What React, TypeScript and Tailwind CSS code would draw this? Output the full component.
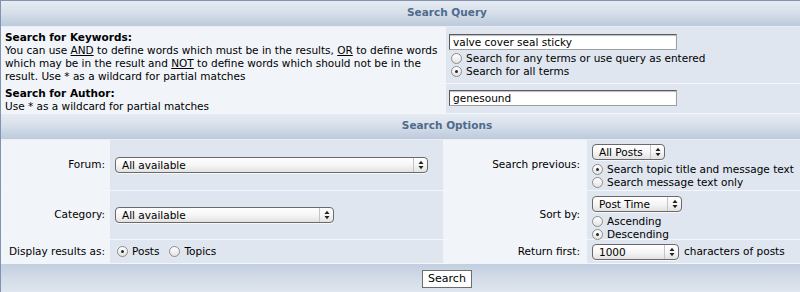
import React from 'react';

const Radio = ({ checked }: { checked?: boolean }) => (
  <span className="relative inline-block w-[11px] h-[11px] shrink-0 rounded-full border border-[#8c8c8c] bg-gradient-to-b from-white to-[#e4e4e4]">
    {checked && <span className="absolute left-[3px] top-[3px] w-[3px] h-[3px] rounded-full bg-[#2a2a2a]" />}
  </span>
);

const Arrows = () => (
  <svg width="6" height="10" viewBox="0 0 6 10">
    <path d="M0.5 4 L3 0.8 L5.5 4 Z" fill="#222" />
    <path d="M0.5 6 L3 9.2 L5.5 6 Z" fill="#222" />
  </svg>
);

const Select = ({ label, className }: { label: string; className: string }) => (
  <div className={`flex items-center h-[16px] rounded-[4px] border border-[#6a6a6a] bg-gradient-to-b from-white via-[#f6f6f6] to-[#e2e2e2] shadow-[0_1px_0_#f5f7fa] ${className}`}>
    <span className="flex-1 pl-[6px] leading-[14px] whitespace-nowrap">{label}</span>
    <span className="flex items-center justify-center w-[14px] h-full border-l border-[#c4c4c4]">
      <Arrows />
    </span>
  </div>
);

const TextInput = ({ value }: { value: string }) => (
  <div className="w-[228px] h-[16px] border border-[#5a5a5a] border-b-[#a0a0a0] border-r-[#a0a0a0] bg-white pl-[3px] leading-[14px] shadow-[inset_0_1px_1px_#bdbdbd]">
    {value}
  </div>
);

const Header = ({ title }: { title: string }) => (
  <div className="h-[26px] flex items-center justify-center pb-[2px] bg-gradient-to-b from-[#e7ecf3] via-[#d5dee9] to-[#bccadc] border-b border-dotted border-[#eef2f7] font-bold text-[#4e6b8d]">
    {title}
  </div>
);

const RadioLine = ({ checked, children }: { checked?: boolean; children: React.ReactNode }) => (
  <label className="flex items-center gap-[4px] h-[13px] whitespace-nowrap">
    <Radio checked={checked} />
    <span>{children}</span>
  </label>
);

export default function App() {
  return (
    <div className="w-[800px] h-[292px] overflow-hidden bg-white text-black text-[10.5px] font-['Lucida_Grande','DejaVu_Sans',sans-serif]">
      <div className="w-[893px] flex flex-col gap-px bg-[#f3f6fa] border-l border-t border-[#8193ae]">
        <Header title="Search Query" />

        <div className="flex h-[56px] -mt-px">
          <div className="w-[445px] bg-[#f1f4f9] px-[4px] pt-[4px] leading-[13px] whitespace-nowrap">
            <div className="font-bold">Search for Keywords:</div>
            <div>
              You can use <u>AND</u> to define words which must be in the results, <u>OR</u> to define words
              <br />
              which may be in the result and <u>NOT</u> to define words which should not be in the
              <br />
              result. Use * as a wildcard for partial matches
            </div>
          </div>
          <div className="flex-1 bg-[#dfe6ef] pl-[3px] pt-[7px]">
            <TextInput value="valve cover seal sticky" />
            <div className="mt-[2px] pl-[2px]">
              <RadioLine>Search for any terms or use query as entered</RadioLine>
              <RadioLine checked>Search for all terms</RadioLine>
            </div>
          </div>
        </div>

        <div className="flex h-[29px]">
          <div className="w-[445px] bg-[#f1f4f9] px-[4px] pt-[3px] leading-[13px] whitespace-nowrap">
            <div className="font-bold">Search for Author:</div>
            <div>Use * as a wildcard for partial matches</div>
          </div>
          <div className="flex-1 bg-[#dfe6ef] pl-[3px] pt-[6px]">
            <TextInput value="genesound" />
          </div>
        </div>

        <Header title="Search Options" />

        <div className="flex h-[50px] -mt-px">
          <div className="w-[109px] bg-[#f1f4f9] flex items-center justify-end pr-[5px]">Forum:</div>
          <div className="w-[333px] bg-[#dfe6ef] flex items-center pl-[5px]">
            <Select label="All available" className="w-[313px]" />
          </div>
          <div className="w-[144px] bg-[#f1f4f9] flex items-center justify-end pr-[7px]">Search previous:</div>
          <div className="flex-1 bg-[#dfe6ef] pl-[5px] pt-[4px]">
            <Select label="All Posts" className="w-[73px]" />
            <div className="mt-[3px]">
              <RadioLine checked>Search topic title and message text</RadioLine>
              <RadioLine>Search message text only</RadioLine>
            </div>
          </div>
        </div>

        <div className="flex h-[48px]">
          <div className="w-[109px] bg-[#f1f4f9] flex items-center justify-end pr-[5px]">Category:</div>
          <div className="w-[333px] bg-[#dfe6ef] flex items-center pl-[5px]">
            <Select label="All available" className="w-[219px]" />
          </div>
          <div className="w-[144px] bg-[#f1f4f9] flex items-center justify-end pr-[7px]">Sort by:</div>
          <div className="flex-1 bg-[#dfe6ef] pl-[5px] pt-[5px]">
            <Select label="Post Time" className="w-[90px]" />
            <div className="mt-[3px]">
              <RadioLine>Ascending</RadioLine>
              <RadioLine checked>Descending</RadioLine>
            </div>
          </div>
        </div>

        <div className="flex h-[23px]">
          <div className="w-[109px] bg-[#f1f4f9] flex items-center justify-end pr-[5px] whitespace-nowrap">Display results as:</div>
          <div className="w-[333px] bg-[#dfe6ef] flex items-center gap-[10px] pl-[7px]">
            <RadioLine checked>Posts</RadioLine>
            <RadioLine>Topics</RadioLine>
          </div>
          <div className="w-[144px] bg-[#f1f4f9] flex items-center justify-end pr-[7px]">Return first:</div>
          <div className="flex-1 bg-[#dfe6ef] flex items-center gap-[5px] pl-[5px]">
            <Select label="1000" className="w-[87px]" />
            <span>characters of posts</span>
          </div>
        </div>

        <div className="h-[29px] flex items-center justify-center bg-gradient-to-b from-[#c2cfe0] via-[#d3dce8] to-[#dfe6ef]">
          <button className="h-[18px] px-[5px] bg-white border border-[#6d6d6d] text-[11px] leading-[16px]">Search</button>
        </div>
      </div>
    </div>
  );
}
